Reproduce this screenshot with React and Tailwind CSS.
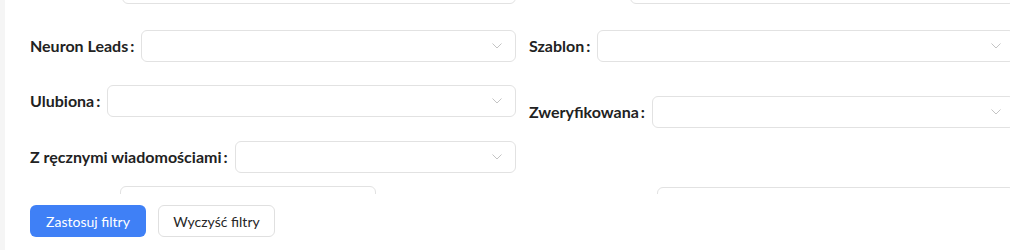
import React from 'react';

// Small down chevron used in every select
function Chevron() {
  return (
    <svg width="12" height="8" viewBox="0 0 12 8" className="shrink-0" fill="none">
      <path d="M1.5 1.5 L6 6 L10.5 1.5" stroke="#c4c4c4" strokeWidth="1" />
    </svg>
  );
}

function Select({ className = '' }) {
  return (
    <div
      className={`h-[32px] bg-white border border-[#e2e2e2] rounded-[6px] flex items-center justify-end pr-[12px] ${className}`}
    >
      <Chevron />
    </div>
  );
}

function Field({ label, className = '', selectClass = 'flex-1', labelClass = '' }) {
  return (
    <div className={`flex items-center ${className}`}>
      <span className={`text-[16px] font-bold text-[#222] whitespace-nowrap shrink-0 ${labelClass}`}>
        {label}
        <span className="ml-[2px] mr-[7px]">:</span>
      </span>
      <Select className={selectClass} />
    </div>
  );
}

export default function App() {
  return (
    <div
      className="w-[1010px] h-[250px] overflow-hidden bg-white flex"
      style={{ fontFamily: 'Lato, "Noto Sans", sans-serif' }}
    >
      {/* left gutter */}
      <div className="w-[5px] shrink-0 bg-[#f5f5f5]" />

      <div className="flex-1 flex flex-col min-w-0">
        {/* scrolled form area */}
        <div className="h-[194px] overflow-hidden pl-[25px]">
          <div className="-mt-[28px] flex flex-col w-[1000px]">
            {/* row 0 */}
            <div className="flex items-start">
              <Field label="Kampania" className="w-[486px]" labelClass="w-[92px] text-[#bbb]" />
              <Field label="Typ leada" className="w-[486px] ml-[13px]" labelClass="w-[101px] text-[#bbb]" />
            </div>
            {/* row 1 */}
            <div className="flex items-start mt-[26px]">
              <Field label="Neuron Leads" className="w-[486px]" />
              <Field label="Szablon" className="w-[486px] ml-[13px]" />
            </div>
            {/* row 2 */}
            <div className="flex items-start mt-[23px]">
              <Field label="Ulubiona" className="w-[486px]" />
              <Field label="Zweryfikowana" className="w-[486px] ml-[13px] mt-[11px]" />
            </div>
            {/* row 3 */}
            <div className="flex items-start mt-[13px]">
              <Field label="Z ręcznymi wiadomościami" className="w-[486px]" />
            </div>
            {/* row 4 (partly hidden) */}
            <div className="flex items-start mt-[13px]">
              <Field label="Kraj" className="w-[486px]" labelClass="w-[90px]" selectClass="w-[256px]" />
              <Field label="Branża" className="w-[486px] ml-[13px] mt-[1px]" labelClass="w-[128px]" />
            </div>
          </div>
        </div>

        {/* sticky footer */}
        <div className="flex-1 bg-white pl-[25px] pt-[11px] flex items-start gap-[12px]">
          <button className="h-[32px] w-[116px] rounded-[6px] bg-[#3f80f6] text-white text-[14px]">
            Zastosuj filtry
          </button>
          <button className="h-[32px] w-[117px] rounded-[6px] bg-white border border-[#e0e0e0] text-[#262626] text-[14px]">
            Wyczyść filtry
          </button>
        </div>
      </div>
    </div>
  );
}
